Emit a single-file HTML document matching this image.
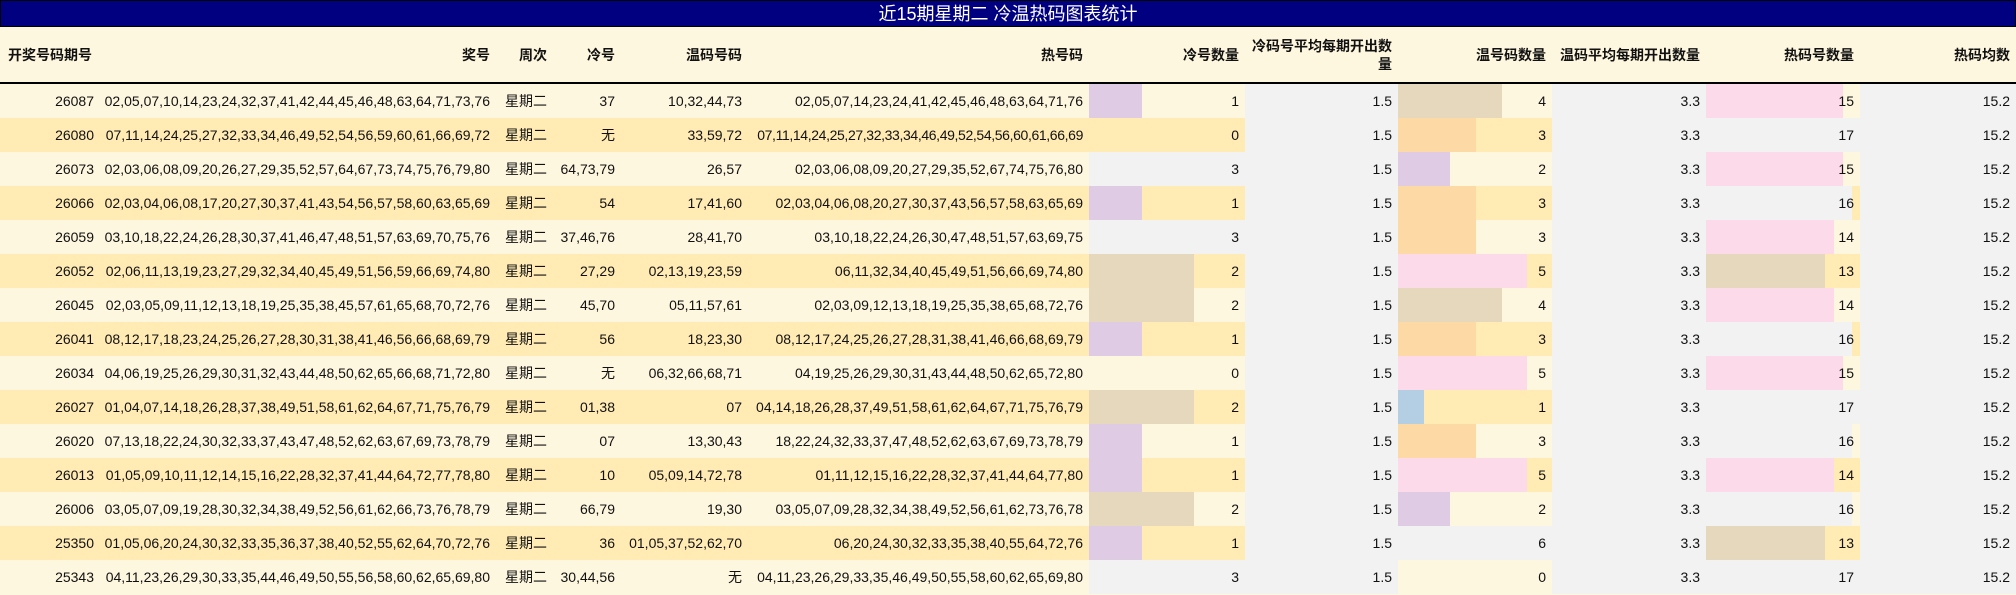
<!DOCTYPE html>
<html><head><meta charset="utf-8"><style>
html,body{margin:0;padding:0;background:#fef7df;width:2016px;height:595px;overflow:hidden}
body{font-family:"Liberation Sans","Noto Sans CJK SC",sans-serif;color:#111}
.t{height:27px;background:#000080;color:#fff;text-align:center;font-size:18px;line-height:27px;box-sizing:border-box;border:1px solid #000}
table{border-collapse:collapse;table-layout:fixed;width:2016px}
td,th{padding:0 6px 0 0;text-align:right;white-space:nowrap;font-size:14px;overflow:visible}
th{height:55px;font-weight:bold;border-bottom:2px solid #000;background:#fef7df;white-space:normal;line-height:18px;font-size:14px}
td{height:34px}
tr.c{background:#fef7df}tr.y{background:#ffebb3}
td.g{background:#f2f2f2}
</style></head><body>
<div class="t">近15期星期二 冷温热码图表统计</div>
<table>
<colgroup><col style="width:100px"><col style="width:396px"><col style="width:57px"><col style="width:68px"><col style="width:127px"><col style="width:341px"><col style="width:156px"><col style="width:153px"><col style="width:154px"><col style="width:154px"><col style="width:154px"><col style="width:156px"></colgroup>
<tr><th style="text-align:left;padding-left:8px;white-space:nowrap">开奖号码期号</th><th>奖号</th><th>周次</th><th>冷号</th><th>温码号码</th><th>热号码</th><th>冷号数量</th><th>冷码号平均每期开出数量</th><th>温号码数量</th><th style="white-space:nowrap">温码平均每期开出数量</th><th>热码号数量</th><th>热码均数</th></tr>

<tr class="c"><td>26087</td><td>02,05,07,10,14,23,24,32,37,41,42,44,45,46,48,63,64,71,73,76</td><td>星期二</td><td>37</td><td>10,32,44,73</td><td>02,05,07,14,23,24,41,42,45,46,48,63,64,71,76</td><td style="background:linear-gradient(90deg,#dfcce4 53px,transparent 53px)">1</td><td class="g">1.5</td><td style="background:linear-gradient(90deg,#e6d8bc 104px,transparent 104px)">4</td><td class="g">3.3</td><td style="background:linear-gradient(90deg,#fcdaea 137px,transparent 137px)">15</td><td class="g">15.2</td></tr>

<tr class="y"><td>26080</td><td>07,11,14,24,25,27,32,33,34,46,49,52,54,56,59,60,61,66,69,72</td><td>星期二</td><td>无</td><td>33,59,72</td><td style="letter-spacing:-0.37px">07,11,14,24,25,27,32,33,34,46,49,52,54,56,60,61,66,69</td><td>0</td><td class="g">1.5</td><td style="background:linear-gradient(90deg,#fdd9a6 78px,transparent 78px)">3</td><td class="g">3.3</td><td class="g">17</td><td class="g">15.2</td></tr>

<tr class="c"><td>26073</td><td>02,03,06,08,09,20,26,27,29,35,52,57,64,67,73,74,75,76,79,80</td><td>星期二</td><td>64,73,79</td><td>26,57</td><td>02,03,06,08,09,20,27,29,35,52,67,74,75,76,80</td><td class="g">3</td><td class="g">1.5</td><td style="background:linear-gradient(90deg,#dfcce4 52px,transparent 52px)">2</td><td class="g">3.3</td><td style="background:linear-gradient(90deg,#fcdaea 137px,transparent 137px)">15</td><td class="g">15.2</td></tr>

<tr class="y"><td>26066</td><td>02,03,04,06,08,17,20,27,30,37,41,43,54,56,57,58,60,63,65,69</td><td>星期二</td><td>54</td><td>17,41,60</td><td>02,03,04,06,08,20,27,30,37,43,56,57,58,63,65,69</td><td style="background:linear-gradient(90deg,#dfcce4 53px,transparent 53px)">1</td><td class="g">1.5</td><td style="background:linear-gradient(90deg,#fdd9a6 78px,transparent 78px)">3</td><td class="g">3.3</td><td style="background:linear-gradient(90deg,#f2f2f2 146px,transparent 146px)">16</td><td class="g">15.2</td></tr>

<tr class="c"><td>26059</td><td>03,10,18,22,24,26,28,30,37,41,46,47,48,51,57,63,69,70,75,76</td><td>星期二</td><td>37,46,76</td><td>28,41,70</td><td>03,10,18,22,24,26,30,47,48,51,57,63,69,75</td><td class="g">3</td><td class="g">1.5</td><td style="background:linear-gradient(90deg,#fdd9a6 78px,transparent 78px)">3</td><td class="g">3.3</td><td style="background:linear-gradient(90deg,#fcdaea 128px,transparent 128px)">14</td><td class="g">15.2</td></tr>

<tr class="y"><td>26052</td><td>02,06,11,13,19,23,27,29,32,34,40,45,49,51,56,59,66,69,74,80</td><td>星期二</td><td>27,29</td><td>02,13,19,23,59</td><td>06,11,32,34,40,45,49,51,56,66,69,74,80</td><td style="background:linear-gradient(90deg,#e6d8bc 105px,transparent 105px)">2</td><td class="g">1.5</td><td style="background:linear-gradient(90deg,#fcdaea 129px,transparent 129px)">5</td><td class="g">3.3</td><td style="background:linear-gradient(90deg,#e6d8bc 119px,transparent 119px)">13</td><td class="g">15.2</td></tr>

<tr class="c"><td>26045</td><td>02,03,05,09,11,12,13,18,19,25,35,38,45,57,61,65,68,70,72,76</td><td>星期二</td><td>45,70</td><td>05,11,57,61</td><td>02,03,09,12,13,18,19,25,35,38,65,68,72,76</td><td style="background:linear-gradient(90deg,#e6d8bc 105px,transparent 105px)">2</td><td class="g">1.5</td><td style="background:linear-gradient(90deg,#e6d8bc 104px,transparent 104px)">4</td><td class="g">3.3</td><td style="background:linear-gradient(90deg,#fcdaea 128px,transparent 128px)">14</td><td class="g">15.2</td></tr>

<tr class="y"><td>26041</td><td>08,12,17,18,23,24,25,26,27,28,30,31,38,41,46,56,66,68,69,79</td><td>星期二</td><td>56</td><td>18,23,30</td><td>08,12,17,24,25,26,27,28,31,38,41,46,66,68,69,79</td><td style="background:linear-gradient(90deg,#dfcce4 53px,transparent 53px)">1</td><td class="g">1.5</td><td style="background:linear-gradient(90deg,#fdd9a6 78px,transparent 78px)">3</td><td class="g">3.3</td><td style="background:linear-gradient(90deg,#f2f2f2 146px,transparent 146px)">16</td><td class="g">15.2</td></tr>

<tr class="c"><td>26034</td><td>04,06,19,25,26,29,30,31,32,43,44,48,50,62,65,66,68,71,72,80</td><td>星期二</td><td>无</td><td>06,32,66,68,71</td><td>04,19,25,26,29,30,31,43,44,48,50,62,65,72,80</td><td>0</td><td class="g">1.5</td><td style="background:linear-gradient(90deg,#fcdaea 129px,transparent 129px)">5</td><td class="g">3.3</td><td style="background:linear-gradient(90deg,#fcdaea 137px,transparent 137px)">15</td><td class="g">15.2</td></tr>

<tr class="y"><td>26027</td><td>01,04,07,14,18,26,28,37,38,49,51,58,61,62,64,67,71,75,76,79</td><td>星期二</td><td>01,38</td><td>07</td><td>04,14,18,26,28,37,49,51,58,61,62,64,67,71,75,76,79</td><td style="background:linear-gradient(90deg,#e6d8bc 105px,transparent 105px)">2</td><td class="g">1.5</td><td style="background:linear-gradient(90deg,#b4cfe3 26px,transparent 26px)">1</td><td class="g">3.3</td><td class="g">17</td><td class="g">15.2</td></tr>

<tr class="c"><td>26020</td><td>07,13,18,22,24,30,32,33,37,43,47,48,52,62,63,67,69,73,78,79</td><td>星期二</td><td>07</td><td>13,30,43</td><td>18,22,24,32,33,37,47,48,52,62,63,67,69,73,78,79</td><td style="background:linear-gradient(90deg,#dfcce4 53px,transparent 53px)">1</td><td class="g">1.5</td><td style="background:linear-gradient(90deg,#fdd9a6 78px,transparent 78px)">3</td><td class="g">3.3</td><td style="background:linear-gradient(90deg,#f2f2f2 146px,transparent 146px)">16</td><td class="g">15.2</td></tr>

<tr class="y"><td>26013</td><td>01,05,09,10,11,12,14,15,16,22,28,32,37,41,44,64,72,77,78,80</td><td>星期二</td><td>10</td><td>05,09,14,72,78</td><td>01,11,12,15,16,22,28,32,37,41,44,64,77,80</td><td style="background:linear-gradient(90deg,#dfcce4 53px,transparent 53px)">1</td><td class="g">1.5</td><td style="background:linear-gradient(90deg,#fcdaea 129px,transparent 129px)">5</td><td class="g">3.3</td><td style="background:linear-gradient(90deg,#fcdaea 128px,transparent 128px)">14</td><td class="g">15.2</td></tr>

<tr class="c"><td>26006</td><td>03,05,07,09,19,28,30,32,34,38,49,52,56,61,62,66,73,76,78,79</td><td>星期二</td><td>66,79</td><td>19,30</td><td>03,05,07,09,28,32,34,38,49,52,56,61,62,73,76,78</td><td style="background:linear-gradient(90deg,#e6d8bc 105px,transparent 105px)">2</td><td class="g">1.5</td><td style="background:linear-gradient(90deg,#dfcce4 52px,transparent 52px)">2</td><td class="g">3.3</td><td style="background:linear-gradient(90deg,#f2f2f2 146px,transparent 146px)">16</td><td class="g">15.2</td></tr>

<tr class="y"><td>25350</td><td>01,05,06,20,24,30,32,33,35,36,37,38,40,52,55,62,64,70,72,76</td><td>星期二</td><td>36</td><td>01,05,37,52,62,70</td><td>06,20,24,30,32,33,35,38,40,55,64,72,76</td><td style="background:linear-gradient(90deg,#dfcce4 53px,transparent 53px)">1</td><td class="g">1.5</td><td class="g">6</td><td class="g">3.3</td><td style="background:linear-gradient(90deg,#e6d8bc 119px,transparent 119px)">13</td><td class="g">15.2</td></tr>

<tr class="c"><td>25343</td><td>04,11,23,26,29,30,33,35,44,46,49,50,55,56,58,60,62,65,69,80</td><td>星期二</td><td>30,44,56</td><td>无</td><td>04,11,23,26,29,33,35,46,49,50,55,58,60,62,65,69,80</td><td class="g">3</td><td class="g">1.5</td><td>0</td><td class="g">3.3</td><td class="g">17</td><td class="g">15.2</td></tr>
</table>
</body></html>
